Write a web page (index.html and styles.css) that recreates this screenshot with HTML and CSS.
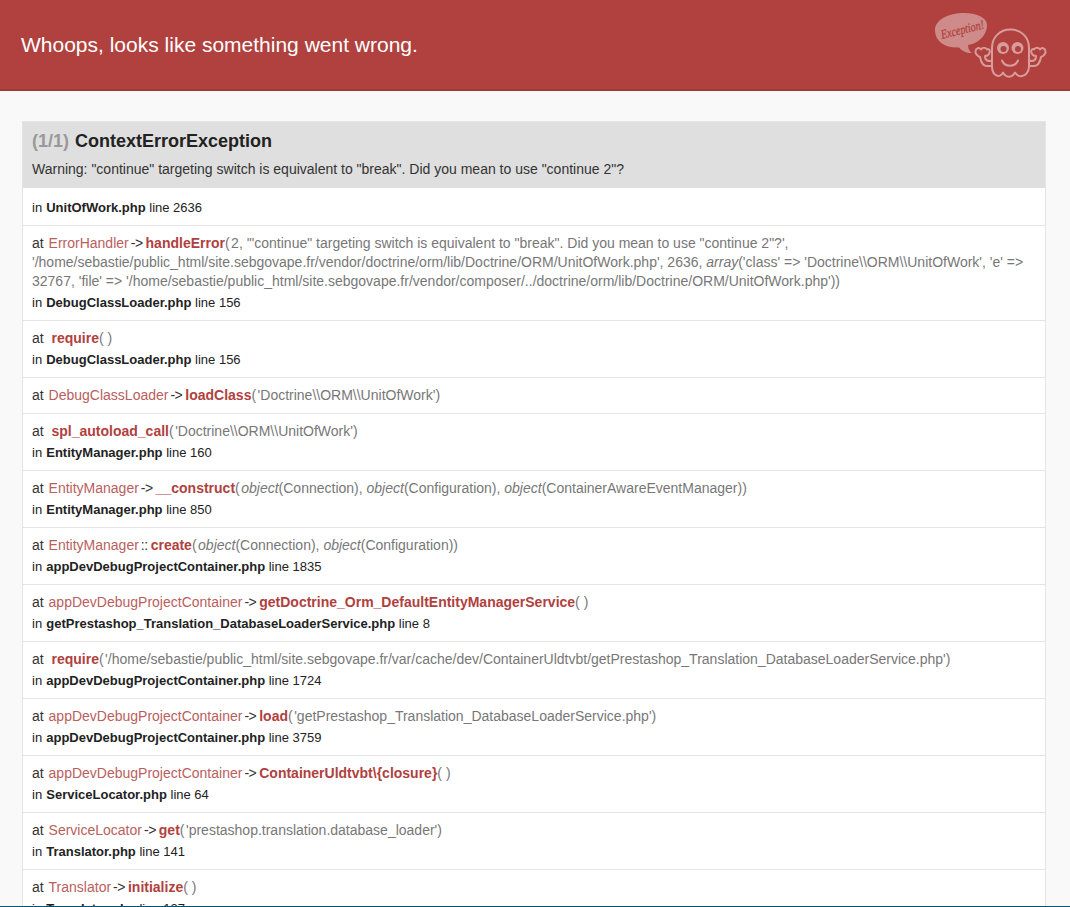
FILE: index.html
```html
<!DOCTYPE html>
<html lang="en">
<head>
<meta charset="utf-8">
<title>Whoops, looks like something went wrong.</title>
<link rel="stylesheet" href="styles.css">
</head>
<body>
<header class="summary">
  <h1 class="summary-title">Whoops, looks like something went wrong.</h1>
  <svg class="ghost" viewBox="0 0 120 80" width="120" height="80" aria-hidden="true">
    <path class="bubble" d="M5 30C5 20 18 13 34 13C48 13 57 18 57 25C57 36 47 44 38 45C38 49 40 52 42 53C36 53 32 51 29 47.500C15 48 5 42 5 30Z"/>
    <text class="bubble-text" transform="translate(12 39) rotate(-14)" textLength="44" lengthAdjust="spacingAndGlyphs">Exception!</text>
    <path class="ghost-line" d="M62 66V48C62 37 70 29.500 80.500 29.500C91 29.500 99 37 99 48V66C99 75 90 80 85 72.500C82 78 76 78 73 72.500C70 79 62 76 62 66Z"/>
    <circle class="eye-white" cx="73" cy="48" r="6"/>
    <circle class="eye-white" cx="87.500" cy="48" r="6"/>
    <circle class="eye-pupil" cx="73.500" cy="49" r="3"/>
    <circle class="eye-pupil" cx="88" cy="49" r="3"/>
    <path class="ghost-line" d="M72 60.500C75 67.500 85 67.500 88 60.500"/>
    <path class="ghost-line" d="M62 66H57C53 66 51 62 50 57C47 56 45 53 45.500 51C46 48 49 47 51 49.500C52 47 56 47 57 49.500C59 48 61 51 59 54C58 56 56 56 55 56C55 58 56 60 57 60.500C58 61 60 61 62 61"/>
    <path class="ghost-line" transform="matrix(-1 0 0 1 161 0)" d="M62 66H57C53 66 51 62 50 57C47 56 45 53 45.500 51C46 48 49 47 51 49.500C52 47 56 47 57 49.500C59 48 61 51 59 54C58 56 56 56 55 56C55 58 56 60 57 60.500C58 61 60 61 62 61"/>
  </svg>
</header>
<main class="trace-box">
  <div class="trace-head">
    <h2 class="trace-title"><span class="count">(1/1)</span> ContextErrorException</h2>
    <p class="trace-message">Warning: "continue" targeting switch is equivalent to "break". Did you mean to use "continue 2"?</p>
  </div>
  <ol class="trace-list">
    <li class="trace-row"><div class="where">in <b>UnitOfWork.php</b> line 2636</div></li>
    <li class="trace-row">
      <div class="call">at <span class="cls">ErrorHandler</span><span class="op">-&gt;</span><b class="fn">handleError</b><span class="par">(</span><span class="arg">2, '"continue" targeting switch is equivalent to "break". Did you mean to use "continue 2"?', '/home/sebastie/public_html/site.sebgovape.fr/vendor/doctrine/orm/lib/Doctrine/ORM/UnitOfWork.php', 2636, <i>array</i>('class' =&gt; 'Doctrine\\ORM\\UnitOfWork', 'e' =&gt; 32767, 'file' =&gt; '/home/sebastie/public_html/site.sebgovape.fr/vendor/composer/../doctrine/orm/lib/Doctrine/ORM/UnitOfWork.php'))</span></div>
      <div class="where">in <b>DebugClassLoader.php</b> line 156</div>
    </li>
    <li class="trace-row">
      <div class="call">at &nbsp;<b class="fn">require</b><span class="par">( )</span></div>
      <div class="where">in <b>DebugClassLoader.php</b> line 156</div>
    </li>
    <li class="trace-row">
      <div class="call">at <span class="cls">DebugClassLoader</span><span class="op">-&gt;</span><b class="fn">loadClass</b><span class="par">(</span><span class="arg">'Doctrine\\ORM\\UnitOfWork')</span></div>
    </li>
    <li class="trace-row">
      <div class="call">at &nbsp;<b class="fn">spl_autoload_call</b><span class="par">(</span><span class="arg">'Doctrine\\ORM\\UnitOfWork')</span></div>
      <div class="where">in <b>EntityManager.php</b> line 160</div>
    </li>
    <li class="trace-row">
      <div class="call">at <span class="cls">EntityManager</span><span class="op">-&gt;</span><b class="fn">__construct</b><span class="par">(</span><span class="arg"><i>object</i>(Connection), <i>object</i>(Configuration), <i>object</i>(ContainerAwareEventManager))</span></div>
      <div class="where">in <b>EntityManager.php</b> line 850</div>
    </li>
    <li class="trace-row">
      <div class="call">at <span class="cls">EntityManager</span><span class="op">::</span><b class="fn">create</b><span class="par">(</span><span class="arg"><i>object</i>(Connection), <i>object</i>(Configuration))</span></div>
      <div class="where">in <b>appDevDebugProjectContainer.php</b> line 1835</div>
    </li>
    <li class="trace-row">
      <div class="call">at <span class="cls">appDevDebugProjectContainer</span><span class="op">-&gt;</span><b class="fn">getDoctrine_Orm_DefaultEntityManagerService</b><span class="par">( )</span></div>
      <div class="where">in <b>getPrestashop_Translation_DatabaseLoaderService.php</b> line 8</div>
    </li>
    <li class="trace-row">
      <div class="call">at &nbsp;<b class="fn">require</b><span class="par">(</span><span class="arg">'/home/sebastie/public_html/site.sebgovape.fr/var/cache/dev/ContainerUldtvbt/getPrestashop_Translation_DatabaseLoaderService.php')</span></div>
      <div class="where">in <b>appDevDebugProjectContainer.php</b> line 1724</div>
    </li>
    <li class="trace-row">
      <div class="call">at <span class="cls">appDevDebugProjectContainer</span><span class="op">-&gt;</span><b class="fn">load</b><span class="par">(</span><span class="arg">'getPrestashop_Translation_DatabaseLoaderService.php')</span></div>
      <div class="where">in <b>appDevDebugProjectContainer.php</b> line 3759</div>
    </li>
    <li class="trace-row">
      <div class="call">at <span class="cls">appDevDebugProjectContainer</span><span class="op">-&gt;</span><b class="fn">ContainerUldtvbt\{closure}</b><span class="par">( )</span></div>
      <div class="where">in <b>ServiceLocator.php</b> line 64</div>
    </li>
    <li class="trace-row">
      <div class="call">at <span class="cls">ServiceLocator</span><span class="op">-&gt;</span><b class="fn">get</b><span class="par">(</span><span class="arg">'prestashop.translation.database_loader')</span></div>
      <div class="where">in <b>Translator.php</b> line 141</div>
    </li>
    <li class="trace-row">
      <div class="call">at <span class="cls">Translator</span><span class="op">-&gt;</span><b class="fn">initialize</b><span class="par">( )</span></div>
      <div class="where">in <b>Translator.php</b> line 137</div>
    </li>
  </ol>
</main>
<div class="bottom-line"></div>
</body>
</html>
```
FILE: styles.css
```css
html, body { height: 907px; overflow: hidden; }
body { margin: 0; background: #f9f9f9; color: #222; font: 14px/19px "Liberation Sans", Arial, sans-serif; }
.summary { display: flex; align-items: center; height: 88px; padding: 1px 21px 0; background: #b0413e; border-bottom: 2px solid #9e3a38; margin-bottom: 30px; position: relative; }
.summary-title { margin: 0; font-size: 21px; line-height: 26px; font-weight: 400; color: #fff; }
.ghost { position: absolute; left: 930px; top: 0; }
.bubble { fill: #cf8b89; }
.bubble-text { fill: #b0413e; font: italic 13px "Liberation Serif", serif; stroke: #b0413e; stroke-width: .25px; }
.ghost-line { fill: none; stroke: #d99c9a; stroke-width: 2; stroke-linecap: round; stroke-linejoin: round; }
.eye-white { fill: #d99c9a; }
.eye-pupil { fill: #b0413e; }
.trace-box { width: 1022px; margin-left: 22px; border: 1px solid #e4e4e4; border-bottom: 0; background: #fff; }
.trace-head { background: #dfdfdf; padding: 9px; height: 48px; }
.trace-title { margin: 0; font-size: 18px; font-weight: 700; line-height: 20px; color: #222; }
.count { color: #999; margin-right: 1px; }
.trace-message { margin: 8px 0 0; line-height: 20px; color: #333; }
.trace-list { margin: 0; padding: 0; list-style: none; }
.trace-row { padding: 8px 9px; border-bottom: 1px solid #e4e4e4; }
.trace-row:first-child { padding-top: 10px; }
.where { font-size: 13px; }
.where b { margin-left: .5px; }
.call + .where { margin-top: 2px; }
.call { color: #333; }
.cls { color: #b9605d; margin-left: 1px; }
.op { margin: 0 3px 0 2px; letter-spacing: -.5px; }
.fn { color: #b0413e; }
.par, .arg { color: #777; }
.arg { margin-left: 1.500px; }
.bottom-line { position: fixed; left: 0; right: 0; bottom: 0; height: 1px; background: #0f4f6f; }
```
